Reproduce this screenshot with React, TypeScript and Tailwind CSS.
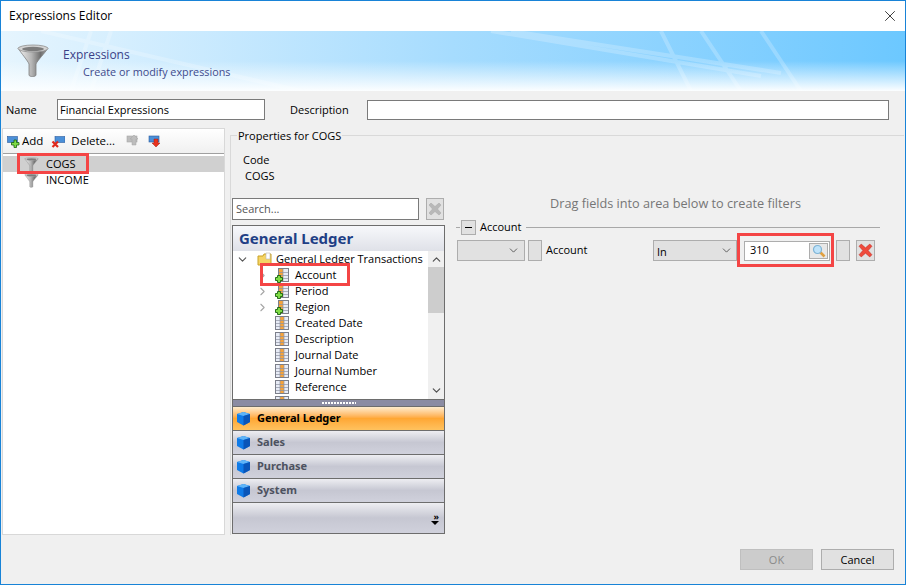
import type { ReactNode } from "react";
import { ChevronDown, ChevronRight, ChevronUp, X } from "lucide-react";

function Funnel({ size = 34, id = "funnelBody" }: { size?: number; id?: string }) {
  return (
    <svg width={size} height={size} viewBox="0 0 32 34" className="shrink-0">
      <defs>
        <linearGradient id={id} x1="0" x2="1" y1="0" y2="0">
          <stop offset="0" stopColor="#f4f4f4" />
          <stop offset="0.45" stopColor="#b5b5b5" />
          <stop offset="0.75" stopColor="#6f6f6f" />
          <stop offset="1" stopColor="#a5a5a5" />
        </linearGradient>
      </defs>
      <path d="M1 4 C4 9 11 17 12 20 L12 31 C12 33 19 33 19 31 L19 20 C20 17 28 9 31 4 Z" fill={`url(#${id})`} stroke="#7f7f7f" strokeWidth="0.8" />
      <ellipse cx="16" cy="4.5" rx="15" ry="3.5" fill="#d4d4d4" stroke="#8f8f8f" strokeWidth="0.8" />
      <ellipse cx="16" cy="5" rx="11" ry="2.2" fill="#7c7c7c" />
    </svg>
  );
}

function PlusBadge() {
  return (
    <svg width="8" height="8" viewBox="0 0 8 8" className="absolute bottom-[-1px] left-0">
      <path d="M2.5 0.5h3v2h2v3h-2v2h-3v-2h-2v-3h2z" fill="#7fdc45" stroke="#17610f" strokeWidth="0.9" />
    </svg>
  );
}

function TableIcon({ plus }: { plus?: boolean }) {
  if (plus) {
    return (
      <span className="relative block h-[14px] w-[14px] shrink-0">
        <svg width="11" height="14" viewBox="0 0 11 14" className="ml-[3px]">
          <rect x="0.5" y="0.5" width="10" height="13" fill="#e8ecf6" stroke="#7c7f8a" />
          <rect x="1" y="1" width="4" height="12" fill="#f6a33b" />
          <path d="M1 4.5h9M1 7.5h9M1 10.5h9M5 1v12" stroke="#8e93a3" strokeWidth="0.7" />
        </svg>
        <PlusBadge />
      </span>
    );
  }
  return (
    <span className="relative block h-[14px] w-[14px] shrink-0">
      <svg width="14" height="14" viewBox="0 0 14 14">
        <rect x="0.5" y="0.5" width="13" height="13" fill="#e8ecf6" stroke="#7c7f8a" />
        <rect x="5" y="1" width="4" height="12" fill="#f6a33b" />
        <path d="M1 4.5h12M1 7.5h12M1 10.5h12M5 1v12M9 1v12" stroke="#8e93a3" strokeWidth="0.7" />
      </svg>
    </span>
  );
}

function Cube() {
  return (
    <svg width="15" height="15" viewBox="0 0 15 15" className="shrink-0">
      <path d="M1 3 L7.5 1 L14 3 L14 11 L7.5 14.5 L1 11 Z" fill="#0f7be8" />
      <path d="M1 3 L7.5 1 L14 3 L7.5 5 Z" fill="#5fb4f7" />
      <path d="M7.5 5 L14 3 L14 11 L7.5 14.5 Z" fill="#0a55b8" />
    </svg>
  );
}

function SmallTool({ color, mark }: { color: string; mark: "plus" | "x" | "up" | "down" }) {
  return (
    <svg width="14" height="14" viewBox="0 0 14 14" className="shrink-0">
      {mark === "up" || mark === "down" ? (
        <rect x="1" y="2" width="10" height="6" fill={color} stroke={mark === "up" ? "#a8a8a8" : "#2d5c9e"} strokeWidth="0.6" />
      ) : (
        <rect x={mark === "x" ? 4 : 0.5} y="2.5" width="10" height="6" fill={color} stroke="#2d5c9e" strokeWidth="0.6" />
      )}
      {mark === "plus" && <path d="M7 6h2.5v2.5H12V11H9.5v2.5H7V11H4.5V8.5H7z" fill="#7fdc45" stroke="#17610f" strokeWidth="0.8" />}
      {mark === "x" && <path d="M1.5 7.5l5.5 5.5M7 7.5l-5.5 5.5" stroke="#e0281c" strokeWidth="2.2" />}
      {mark === "up" && <path d="M8 1l4 4h-2v6H6V5H4z" fill="#bdbdbd" stroke="#a5a5a5" strokeWidth="0.5" />}
      {mark === "down" && <path d="M8 13l4-4h-2V5H6v4H4z" fill="#e8331f" stroke="#a01c10" strokeWidth="0.5" />}
    </svg>
  );
}

function Magnifier() {
  return (
    <svg width="14" height="14" viewBox="0 0 14 14">
      <path d="M8 8l4.5 4.5" stroke="#e0a040" strokeWidth="2.6" />
      <circle cx="5.5" cy="5.5" r="4" fill="#bfe3fa" stroke="#7fb4d6" strokeWidth="1.2" />
    </svg>
  );
}

function RedX({ size, muted }: { size: number; muted?: boolean }) {
  return (
    <svg width={size} height={size} viewBox="0 0 14 14">
      <path
        d="M1 3l2-2 4 3.5L11 1l2 2-3.5 4L13 11l-2 2-4-3.5L3 13l-2-2 3.5-4z"
        fill={muted ? "#b8b8b8" : "#ef4a3c"}
        stroke={muted ? "#a6a6a6" : "#c22a20"}
        strokeWidth="0.5"
      />
    </svg>
  );
}

function FieldRow({ label, expandable }: { label?: string; expandable?: boolean }) {
  return (
    <div className="flex h-4 items-center">
      <span className="flex w-[17px] shrink-0 justify-center">
        {expandable && <ChevronRight size={13} strokeWidth={2} className="text-[#a6a6a6]" />}
      </span>
      <span className="ml-[4px]">
        <TableIcon plus={expandable} />
      </span>
      {label && <span className="ml-[6px]">{label}</span>}
    </div>
  );
}

function NavItem({ label, active }: { label: string; active?: boolean }) {
  return (
    <div
      className={
        active
          ? "flex h-[24px] items-center gap-[6px] border-b border-[#6d6d6d] bg-gradient-to-b from-[#ffeccb] via-[#ffa733] to-[#ffc25e] pl-[3px] text-[11px] font-bold text-black"
          : "flex h-[24px] items-center gap-[6px] border-b border-[#6d6d6d] bg-gradient-to-b from-[#eeeef2] via-[#c6c7d2] to-[#d0d1dc] pl-[3px] text-[11px] font-bold text-[#4d5260]"
      }
    >
      <Cube />
      <span className="font-['Noto_Sans',sans-serif]">{label}</span>
    </div>
  );
}

function Box({ className, children }: { className: string; children?: ReactNode }) {
  return <div className={`flex items-center justify-center border border-[#adadad] bg-[#e1e1e1] ${className}`}>{children}</div>;
}

export default function App() {
  return (
    <div className="relative flex h-[585px] w-[906px] flex-col overflow-hidden border-x border-y border-[#1883d7] bg-[#f0f0f0] font-['Open_Sans',sans-serif] text-[11px] text-black">
      {/* Title bar */}
      <div className="flex h-[30px] shrink-0 items-center justify-between bg-white pl-[8px] pr-[6px] text-[12px]">
        <span>Expressions Editor</span>
        <X size={18} strokeWidth={1} />
      </div>

      {/* Banner */}
      <div className="relative flex h-[60px] shrink-0">
        <div className="absolute inset-0 bg-gradient-to-r from-[#e6f5fe] via-[#a6dcfe] to-[#6cc8ff]" />
        <svg className="absolute inset-0" width="904" height="60">
          <path d="M490 0L760 45M510 0L780 42M660 0L690 60M700 0L740 60M760 0L800 60M40 0L300 60M90 0L70 60M110 0L90 60" stroke="#ffffff" strokeOpacity="0.22" strokeWidth="4" fill="none" />
        </svg>
        <div className="absolute inset-x-0 bottom-0 h-[30px] bg-gradient-to-b from-transparent to-[#fcfeff]" />
        <div className="relative ml-[15px] mt-[13px]">
          <Funnel />
        </div>
        <div className="relative ml-[13px] mt-[14px] text-[#3b3f86]">
          <div className="text-[12px] leading-[20px]">Expressions</div>
          <div className="ml-[20px] text-[10.8px] leading-[14px] text-[#3f4a8c]">Create or modify expressions</div>
        </div>
      </div>

      {/* Name row */}
      <div className="flex h-[37px] shrink-0 items-center pl-[5px] pr-[16px] text-[11px]">
        <span className="w-[51px] pt-[2px]">Name</span>
        <div className="flex h-[21px] w-[208px] items-center border border-[#7a7a7a] bg-white pl-[2px] pt-[2px]">Financial Expressions</div>
        <span className="ml-[25px] w-[77px] pt-[2px]">Description</span>
        <div className="h-[20px] flex-1 border border-[#7a7a7a] bg-white" />
      </div>

      {/* Main */}
      <div className="flex min-h-0 flex-1">
        {/* Left list */}
        <div className="ml-[1px] flex h-[407px] w-[223px] shrink-0 flex-col border border-[#d8d8d8] bg-white">
          <div className="flex h-[25px] shrink-0 items-center border-b border-[#a0a0a0] bg-gradient-to-b from-[#ffffff] to-[#f0f0f0] pl-[4px] text-[11.5px]">
            <SmallTool color="#4a8fd8" mark="plus" />
            <span className="ml-[1px]">Add</span>
            <span className="ml-[8px]"><SmallTool color="#4a8fd8" mark="x" /></span>
            <span className="ml-[6px]">Delete...</span>
            <span className="ml-[11px]"><SmallTool color="#bdbdbd" mark="up" /></span>
            <span className="ml-[8px]"><SmallTool color="#4a8fd8" mark="down" /></span>
          </div>
          <div className="mt-[2px] text-[11px]">
            <div className="flex h-4 items-center bg-[#d0d0d0] pl-[21px]">
              <Funnel size={15} id="funnelCogs" />
              <span className="ml-[7px]">COGS</span>
            </div>
            <div className="flex h-4 items-center pl-[21px]">
              <Funnel size={15} id="funnelIncome" />
              <span className="ml-[7px]">INCOME</span>
            </div>
          </div>
        </div>

        {/* Properties group */}
        <div className="relative ml-[5px] mr-[1px] mt-[7px] flex h-[400px] flex-1 flex-col border-l border-t border-[#d9d9d9]">
          <span className="absolute left-[6px] top-[-7px] bg-[#f0f0f0] px-[1px] leading-[14px]">Properties for COGS</span>
          <div className="ml-[12px] mt-[16px] leading-[16px]">
            <div>Code</div>
            <div className="ml-[2px]">COGS</div>
          </div>

          <div className="flex min-h-0 flex-1">
            {/* Field picker */}
            <div className="ml-[1px] mt-[14px] flex w-[213px] shrink-0 flex-col">
              <div className="flex h-[22px] shrink-0">
                <div className="flex w-[187px] items-center border border-[#7a7a7a] bg-white pl-[3px] text-[#555555]">Search...</div>
                <Box className="ml-[7px] w-[18px] bg-[#d6d6d6]">
                  <RedX size={14} muted />
                </Box>
              </div>
              <div className="mt-[5px] flex h-[309px] flex-col border border-[#6d6d6d]">
                <div className="flex h-[25px] shrink-0 items-center bg-gradient-to-b from-[#f7f8fb] to-[#dfe1e8] pl-[6px] font-['Noto_Sans',sans-serif] text-[15px] font-bold text-[#1f3f86]">
                  General Ledger
                </div>
                <div className="flex h-[148px] shrink-0 overflow-hidden bg-white">
                  <div className="min-w-0 flex-1 pl-[1px]">
                    <div className="flex h-4 items-center">
                      <span className="flex w-[17px] justify-center">
                        <ChevronDown size={13} strokeWidth={2} className="text-[#555555]" />
                      </span>
                      <svg width="16" height="14" viewBox="0 0 16 14" className="ml-[6px]">
                        <path d="M1 4h5l1-2h7v11H1z" fill="#f5d465" stroke="#c9a227" />
                        <path d="M9 1h4v6H9z" fill="#ffffff" stroke="#b5b5b5" strokeWidth="0.6" />
                      </svg>
                      <span className="ml-[3px] whitespace-nowrap">General Ledger Transactions</span>
                    </div>
                    <div className="ml-[20px]">
                      <FieldRow label="Account" expandable />
                      <FieldRow label="Period" expandable />
                      <FieldRow label="Region" expandable />
                      <FieldRow label="Created Date" />
                      <FieldRow label="Description" />
                      <FieldRow label="Journal Date" />
                      <FieldRow label="Journal Number" />
                      <FieldRow label="Reference" />
                      <FieldRow />
                    </div>
                  </div>
                  <div className="flex w-[16px] shrink-0 flex-col items-center bg-[#f0f0f0] text-[#505050]">
                    <ChevronUp size={13} strokeWidth={2.2} className="mt-[2px] shrink-0" />
                    <div className="mt-[1px] h-[46px] w-full shrink-0 bg-[#cdcdcd]" />
                    <div className="flex-1" />
                    <ChevronDown size={13} strokeWidth={2.2} className="mb-[2px] shrink-0" />
                  </div>
                </div>
                <div className="flex h-[8px] shrink-0 items-center justify-center border-y border-[#6d6d6d] bg-[#8b8ca3]">
                  <div className="h-[2px] w-[34px] bg-[repeating-linear-gradient(90deg,#ffffff_0,#ffffff_2px,transparent_2px,transparent_3px)]" />
                </div>
                <NavItem label="General Ledger" active />
                <NavItem label="Sales" />
                <NavItem label="Purchase" />
                <NavItem label="System" />
                <div className="flex flex-1 flex-col items-end justify-end bg-gradient-to-b from-[#eeeef2] via-[#c6c7d2] to-[#d0d1dc] pb-[8px] pr-[5px] text-[9px] font-bold leading-[7px]">
                  <span>»</span>
                  <span className="mt-[1px] h-0 w-0 border-x-[4px] border-t-[4px] border-x-transparent border-t-black" />
                </div>
              </div>
            </div>

            {/* Filters */}
            <div className="mt-[11px] flex min-w-0 flex-1 flex-col pl-[11px] pr-[24px]">
              <div className="ml-[15px] text-center text-[12.7px] leading-[16px] text-[#767676]">Drag fields into area below to create filters</div>
              <div className="mt-[8px] flex h-[16px] items-center">
                <div className="h-px w-[4px] bg-[#a8a8a8]" />
                <Box className="ml-[1px] h-[15px] w-[15px]">
                  <span className="h-px w-[7px] bg-black" />
                </Box>
                <span className="ml-[4px]">Account</span>
                <div className="ml-[4px] h-px flex-1 bg-[#a8a8a8]" />
              </div>
              <div className="mt-[5px] flex h-[21px] items-center">
                <Box className="ml-[1px] h-[21px] w-[68px] !justify-end pr-[4px]">
                  <ChevronDown size={13} strokeWidth={1.5} className="text-[#444444]" />
                </Box>
                <Box className="ml-[3px] h-[21px] w-[14px]" />
                <span className="ml-[4px] w-[107px]">Account</span>
                <Box className="h-[21px] w-[84px] !justify-between px-[3px]">
                  <span className="pt-[3px]">In</span>
                  <ChevronDown size={13} strokeWidth={1.5} className="text-[#444444]" />
                </Box>
                <div className="ml-[7px] flex h-[20px] w-[86px] items-center justify-between border border-[#adadad] bg-white pl-[5px] pr-[1px]">
                  <span>310</span>
                  <Box className="h-[16px] w-[19px] bg-[#e8e8e8]">
                    <Magnifier />
                  </Box>
                </div>
                <Box className="ml-[6px] h-[21px] w-[14px]" />
                <Box className="ml-[6px] h-[21px] w-[19px]">
                  <RedX size={15} />
                </Box>
              </div>
            </div>
          </div>
        </div>
      </div>

      {/* Footer */}
      <div className="flex h-[48px] shrink-0 items-start justify-end pr-[11px] pt-[13px] text-[11px]">
        <div className="flex h-[21px] w-[73px] items-center justify-center border border-[#bfbfbf] bg-[#cccccc] pt-[2px] text-[#8a8a8a]">OK</div>
        <div className="ml-[8px] flex h-[21px] w-[73px] items-center justify-center border border-[#adadad] bg-[#e1e1e1] pt-[2px]">Cancel</div>
      </div>

      {/* Red callouts */}
      <div className="pointer-events-none absolute left-[16px] top-[152px] h-[21px] w-[72px] border-[3px] border-[#f44545]" />
      <div className="pointer-events-none absolute left-[259px] top-[262px] h-[23px] w-[90px] border-[3px] border-[#f44545]" />
      <div className="pointer-events-none absolute left-[736px] top-[232px] h-[34px] w-[97px] border-[3px] border-[#f44545]" />
    </div>
  );
}
